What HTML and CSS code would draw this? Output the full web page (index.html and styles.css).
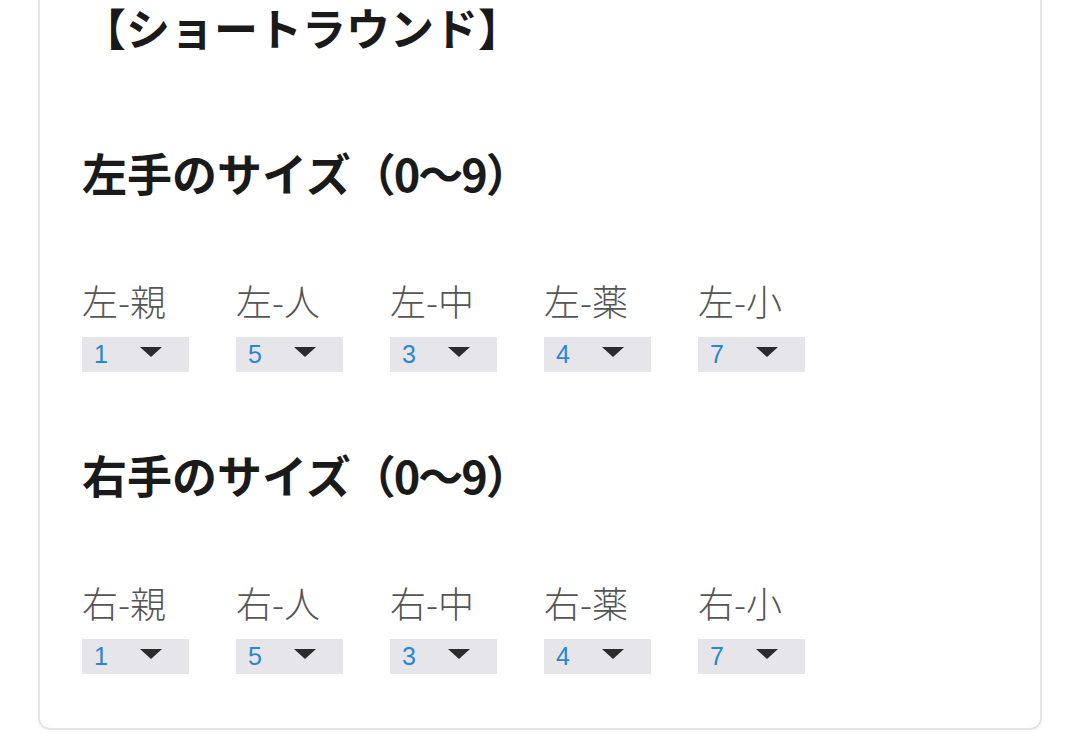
FILE: index.html
```html
<!DOCTYPE html>
<html lang="ja">
<head>
<meta charset="utf-8">
<link rel="stylesheet" href="styles.css">
</head>
<body>
<div class="card">
  <h1 class="title">【ショートラウンド】</h1>

  <section class="hand">
    <h2 class="hand-title">左手のサイズ<span class="range">（0〜9）</span></h2>
    <div class="fingers">
      <div class="finger"><div class="label">左-親</div><div class="select"><span class="val">1</span><svg class="caret" viewBox="0 0 22 10"><polygon points="0,0 22,0 11,10"/></svg></div></div>
      <div class="finger"><div class="label">左-人</div><div class="select"><span class="val">5</span><svg class="caret" viewBox="0 0 22 10"><polygon points="0,0 22,0 11,10"/></svg></div></div>
      <div class="finger"><div class="label">左-中</div><div class="select"><span class="val">3</span><svg class="caret" viewBox="0 0 22 10"><polygon points="0,0 22,0 11,10"/></svg></div></div>
      <div class="finger"><div class="label">左-薬</div><div class="select"><span class="val">4</span><svg class="caret" viewBox="0 0 22 10"><polygon points="0,0 22,0 11,10"/></svg></div></div>
      <div class="finger"><div class="label">左-小</div><div class="select"><span class="val">7</span><svg class="caret" viewBox="0 0 22 10"><polygon points="0,0 22,0 11,10"/></svg></div></div>
    </div>
  </section>

  <section class="hand second">
    <h2 class="hand-title">右手のサイズ<span class="range">（0〜9）</span></h2>
    <div class="fingers">
      <div class="finger"><div class="label">右-親</div><div class="select"><span class="val">1</span><svg class="caret" viewBox="0 0 22 10"><polygon points="0,0 22,0 11,10"/></svg></div></div>
      <div class="finger"><div class="label">右-人</div><div class="select"><span class="val">5</span><svg class="caret" viewBox="0 0 22 10"><polygon points="0,0 22,0 11,10"/></svg></div></div>
      <div class="finger"><div class="label">右-中</div><div class="select"><span class="val">3</span><svg class="caret" viewBox="0 0 22 10"><polygon points="0,0 22,0 11,10"/></svg></div></div>
      <div class="finger"><div class="label">右-薬</div><div class="select"><span class="val">4</span><svg class="caret" viewBox="0 0 22 10"><polygon points="0,0 22,0 11,10"/></svg></div></div>
      <div class="finger"><div class="label">右-小</div><div class="select"><span class="val">7</span><svg class="caret" viewBox="0 0 22 10"><polygon points="0,0 22,0 11,10"/></svg></div></div>
    </div>
  </section>
</div>
</body>
</html>
```

FILE: styles.css
```css
html, body {
  margin: 0;
  padding: 0;
  background: #ffffff;
}
body {
  font-family: "Noto Sans CJK JP", "Noto Sans", sans-serif;
  color: #1c1c1c;
}
.card {
  margin: 0 38px 0 38px;
  border: 2px solid #e4e4e4;
  border-top: none;
  border-radius: 0 0 12px 12px;
  padding: 1px 0 54px 42px;
  box-shadow: 0 1px 2px rgba(0,0,0,0.04);
}
.title {
  margin: 0;
  font-size: 44px;
  line-height: 52px;
  font-weight: 700;
  color: #1a1a1a;
}
.hand-title {
  margin: 97px 0 0 0;
  font-size: 45px;
  line-height: 45px;
  font-weight: 700;
  color: #1a1a1a;
  white-space: nowrap;
}
.range {
  letter-spacing: -2px;
}
.second .hand-title {
  margin-top: 80px;
}
.fingers {
  display: flex;
  gap: 47px;
  margin-top: 87px;
}
.finger {
  display: flex;
  flex-direction: column;
  width: 107px;
}
.label {
  font-size: 36px;
  line-height: 36px;
  font-weight: 300;
  color: #555555;
  white-space: nowrap;
}
.select {
  margin-top: 19px;
  height: 35px;
  background: #e6e6ea;
  display: flex;
  align-items: center;
  padding-left: 12px;
  box-sizing: border-box;
}
.val {
  font-family: "Liberation Sans", Arial, sans-serif;
  font-size: 25px;
  color: #2a85d4;
  width: 46px;
}
.caret {
  width: 22px;
  height: 10px;
  fill: #2b2b2b;
  margin-top: -6px;
}
```
